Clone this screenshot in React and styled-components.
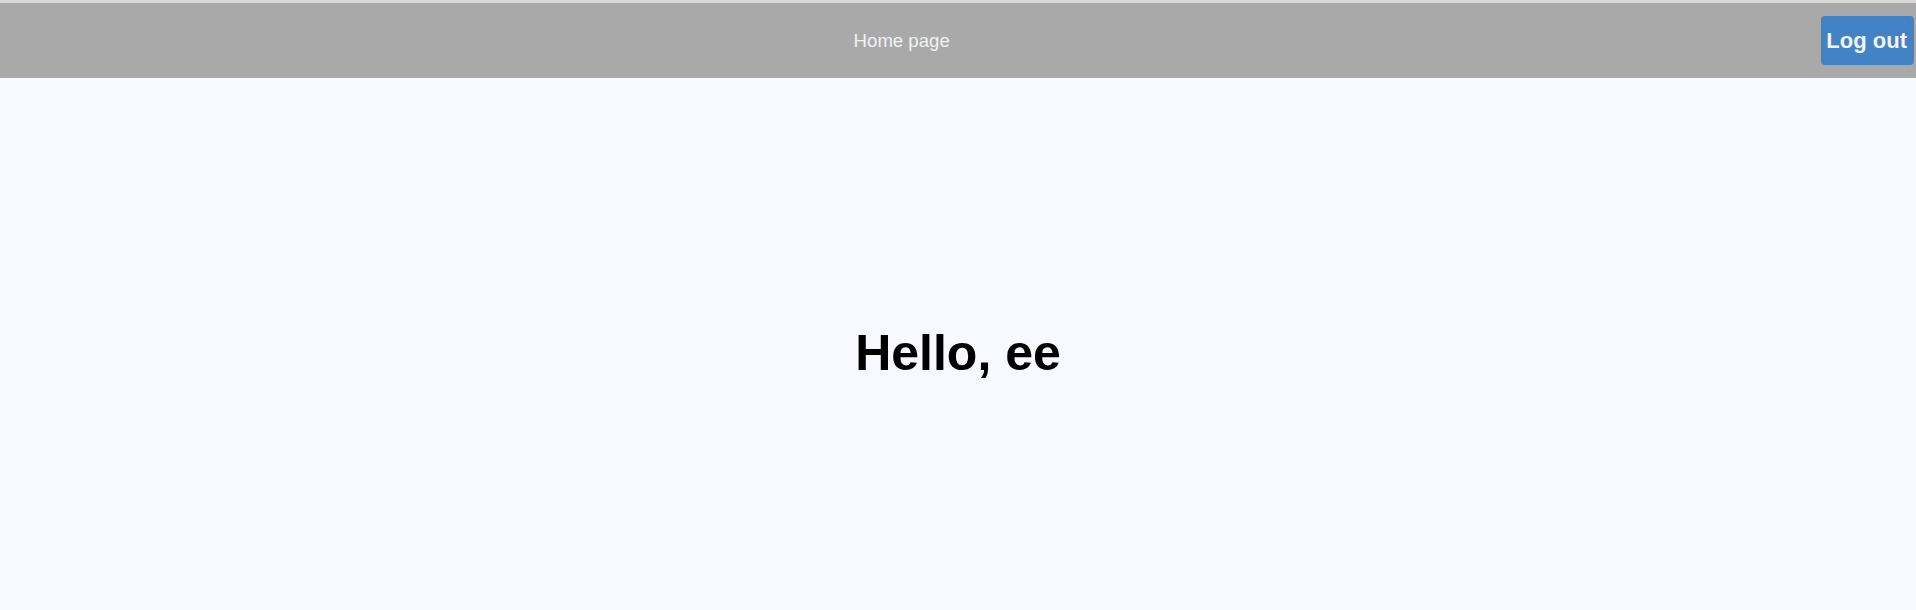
import styled, { createGlobalStyle } from "styled-components";

const GlobalStyle = createGlobalStyle`
  html, body {
    margin: 0;
    padding: 0;
    background: #f8f8ff;
    font-family: "Liberation Sans", Arial, sans-serif;
  }
`;

//Style Components :

const Page = styled.div`
  min-height: 610px;
  display: flex;
  flex-direction: column;
  border-top: 3px solid #d9d9d9;
  box-sizing: border-box;
`;

const Header = styled.header`
  display: flex;
  align-items: center;
  height: 75px;
  background: #a9a9a9;
`;

const Nav = styled.nav`
  flex: 1;
  display: flex;
  justify-content: center;
  padding-right: 18px;
`;

const NavLink = styled.a`
  color: #f2f2f2;
  font-size: 18.6px;
  text-decoration: none;
  cursor: pointer;
`;

const LogoutButton = styled.button`
  margin: 0 2px 0 0;
  padding: 12px 7px 12px 5px;
  border: none;
  border-radius: 4px;
  background: #4183c4;
  color: #f4f4f4;
  font-family: "Liberation Sans", Arial, sans-serif;
  font-size: 22px;
  font-weight: 700;
  line-height: 25px;
  cursor: pointer;
`;

const Main = styled.main`
  flex: 1;
  display: flex;
  justify-content: center;
  align-items: center;
  padding-top: 18px;
`;

const Greeting = styled.h1`
  margin: 0;
  font-size: 50px;
  font-weight: 700;
  color: #000;
`;

//Component :

function App() {
  const user = { name: "ee" };

  return (
    <>
      <GlobalStyle />
      <Page>
        <Header>
          <Nav>
            <NavLink>Home page</NavLink>
          </Nav>
          <LogoutButton>Log out</LogoutButton>
        </Header>
        <Main>
          <Greeting>Hello, {user.name}</Greeting>
        </Main>
      </Page>
    </>
  );
}

export default App;
